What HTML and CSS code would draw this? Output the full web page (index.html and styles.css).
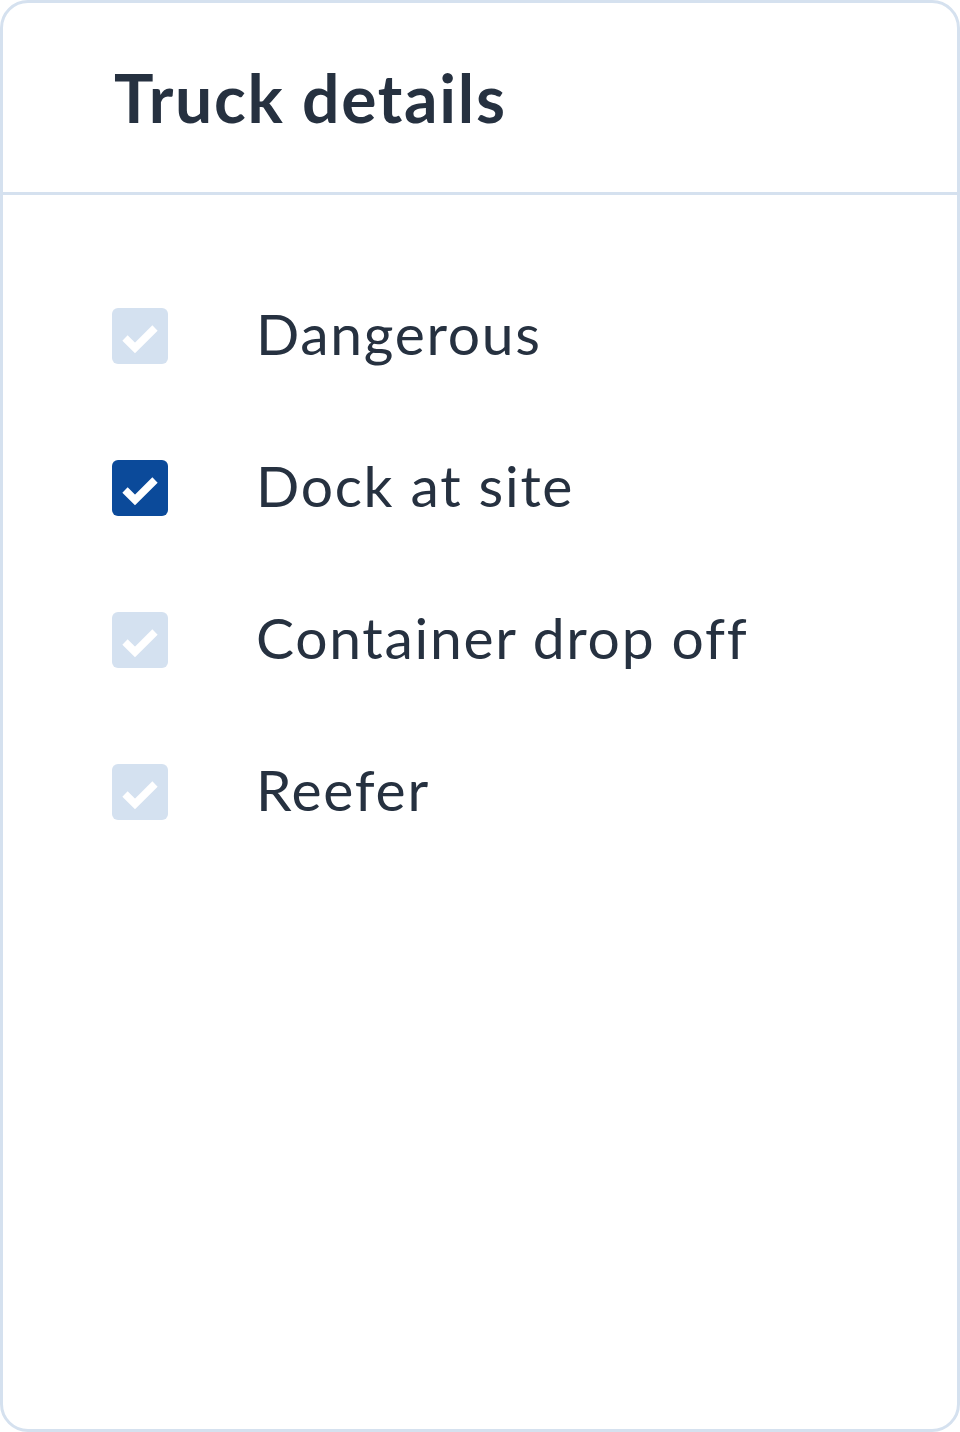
FILE: index.html
```html
<!DOCTYPE html>
<html>
<head>
<meta charset="utf-8">
<link rel="stylesheet" href="styles.css">
</head>
<body>
<div class="card">
  <div class="card-header">
    <h1 class="title">Truck details</h1>
  </div>
  <ul class="options">
    <li class="option">
      <span class="box"><svg viewBox="0 0 56 56" width="56" height="56"><path d="M13 30 L23 40 L43 20" fill="none" stroke="#fff" stroke-width="7.5"/></svg></span>
      <span class="label">Dangerous</span>
    </li>
    <li class="option">
      <span class="box checked"><svg viewBox="0 0 56 56" width="56" height="56"><path d="M13 30 L23 40 L43 20" fill="none" stroke="#fff" stroke-width="7.5"/></svg></span>
      <span class="label">Dock at site</span>
    </li>
    <li class="option">
      <span class="box"><svg viewBox="0 0 56 56" width="56" height="56"><path d="M13 30 L23 40 L43 20" fill="none" stroke="#fff" stroke-width="7.5"/></svg></span>
      <span class="label">Container drop off</span>
    </li>
    <li class="option">
      <span class="box"><svg viewBox="0 0 56 56" width="56" height="56"><path d="M13 30 L23 40 L43 20" fill="none" stroke="#fff" stroke-width="7.5"/></svg></span>
      <span class="label">Reefer</span>
    </li>
  </ul>
</div>
</body>
</html>
```
FILE: styles.css
```css
* { box-sizing: border-box; }
html, body { margin: 0; padding: 0; background: #fff; }
body { font-family: "Lato", "Noto Sans", sans-serif; color: #263140; }
.card {
  width: 960px;
  height: 1432px;
  border: 3px solid #d5e1ef;
  border-radius: 28px;
  background: #fff;
  overflow: hidden;
}
.card-header {
  height: 192px;
  border-bottom: 3px solid #d5e1ef;
  display: flex;
  align-items: center;
  padding-left: 111px;
}
.title {
  margin: 0;
  font-size: 66px;
  font-weight: 700;
  letter-spacing: 1.7px;
  line-height: 1;
}
.options {
  list-style: none;
  margin: 0;
  padding: 113px 0 0 109px;
  display: flex;
  flex-direction: column;
  gap: 96px;
}
.option {
  display: flex;
  align-items: center;
  gap: 88px;
  height: 56px;
}
.box {
  width: 56px;
  height: 56px;
  border-radius: 6px;
  background: #d4e1f0;
  flex: none;
  display: block;
}
.box svg { display: block; }
.box.checked { background: #0b4a9a; }
.label {
  font-size: 57px;
  font-weight: 400;
  letter-spacing: 1.7px;
  line-height: 1;
  padding-bottom: 6px;
}
```
